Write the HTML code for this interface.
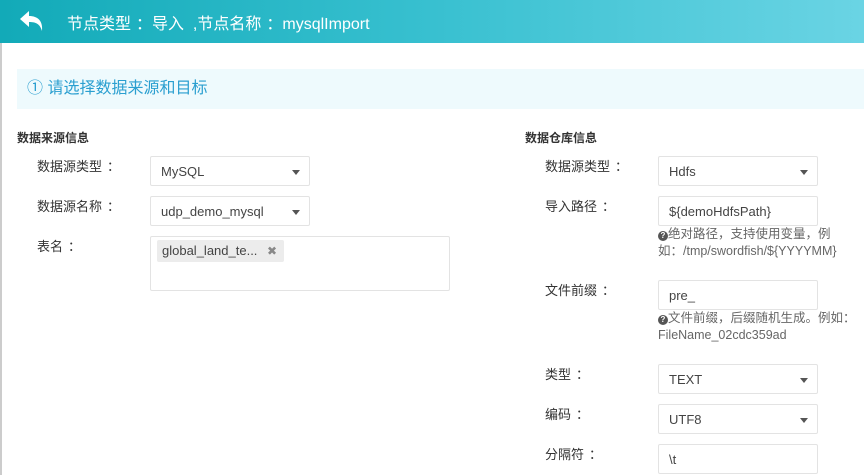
<!DOCTYPE html>
<html><head><meta charset="utf-8"><style>
body{margin:0;width:864px;height:475px;overflow:hidden;background:#fff;font-family:"Liberation Sans","Noto Sans CJK SC",sans-serif;position:relative;color:#333}
.a{position:absolute}
.hdr{left:0;top:0;width:864px;height:43px;background:linear-gradient(90deg,#12aab8,#38c0d0 50%,#6ad4e4);color:#fff;font-size:16px}
.lb{left:0;top:43px;width:2px;height:432px;background:#ccc}
.panel{left:17px;top:69px;width:847px;height:40px;background:#eefafd;color:#2a9fd0;font-size:16px;line-height:40px;padding-left:10px;box-sizing:border-box}
.h{font-size:12px;font-weight:bold;color:#333}
.l{font-size:13px;color:#333}
.c{margin-left:5px}
.box{border:1px solid #e3e3e3;border-radius:2px;box-sizing:border-box;font-size:13px;color:#444;padding-left:10px;line-height:29px;background:#fff}
.car{position:absolute;right:9px;top:13px;width:0;height:0;border-left:4px solid transparent;border-right:4px solid transparent;border-top:5px solid #555}
.hint{font-size:12.5px;color:#666;line-height:17px}
.q{display:inline-block;width:10px;height:10px;border-radius:50%;background:#555;color:#fff;font-size:8px;line-height:10px;text-align:center;font-weight:bold;vertical-align:0}
</style></head><body>
<div class="a hdr">
<svg class="a" style="left:18px;top:9px" width="28" height="24" viewBox="0 0 28 24"><path d="M11 2 L2 10 L11 18 L11 13 C18 13 22 15 24 22 C25 12 20 7 11 7 Z" fill="#fff"/></svg>
<div class="a" style="left:67px;top:10px">节点类型<span class="c">：</span>导入&nbsp; ,节点名称<span class="c">：</span>mysqlImport</div>
</div>
<div class="a lb"></div>
<div class="a panel">① 请选择数据来源和目标</div>
<div class="a h" style="left:17px;top:129px">数据来源信息</div>
<div class="a h" style="left:525px;top:129px">数据仓库信息</div>
<div class="a l" style="left:37px;top:156px">数据源类型<span class="c">：</span></div>
<div class="a box" style="left:150px;top:156px;width:160px;height:30px">MySQL<span class="car"></span></div>
<div class="a l" style="left:37px;top:196px">数据源名称<span class="c">：</span></div>
<div class="a box" style="left:150px;top:196px;width:160px;height:30px">udp_demo_mysql<span class="car"></span></div>
<div class="a l" style="left:37px;top:236px">表名<span class="c">：</span></div>
<div class="a box" style="left:150px;top:236px;width:300px;height:55px;padding:0"></div>
<div class="a" style="left:157px;top:240px;width:127px;height:22px;background:#ececec;border-radius:2px;font-size:13px;color:#444;line-height:22px;padding-left:5px;box-sizing:border-box">global_land_te...<span style="position:absolute;right:7px;color:#888;font-size:12px">✖</span></div>
<div class="a l" style="left:545px;top:156px">数据源类型<span class="c">：</span></div>
<div class="a box" style="left:658px;top:156px;width:160px;height:30px">Hdfs<span class="car"></span></div>
<div class="a l" style="left:545px;top:196px">导入路径<span class="c">：</span></div>
<div class="a box" style="left:658px;top:196px;width:160px;height:30px">${demoHdfsPath}</div>
<div class="a hint" style="left:658px;top:226px;width:180px"><span class="q">?</span>绝对路径，支持使用变量，例如：/tmp/swordfish/${YYYYMM}</div>
<div class="a l" style="left:545px;top:280px">文件前缀<span class="c">：</span></div>
<div class="a box" style="left:658px;top:280px;width:160px;height:30px">pre_</div>
<div class="a hint" style="left:658px;top:310px;width:200px"><span class="q">?</span>文件前缀，后缀随机生成。例如：FileName_02cdc359ad</div>
<div class="a l" style="left:545px;top:364px">类型<span class="c">：</span></div>
<div class="a box" style="left:658px;top:364px;width:160px;height:30px">TEXT<span class="car"></span></div>
<div class="a l" style="left:545px;top:404px">编码<span class="c">：</span></div>
<div class="a box" style="left:658px;top:404px;width:160px;height:30px">UTF8<span class="car"></span></div>
<div class="a l" style="left:545px;top:444px">分隔符<span class="c">：</span></div>
<div class="a box" style="left:658px;top:444px;width:160px;height:30px">\t</div>
</body></html>
